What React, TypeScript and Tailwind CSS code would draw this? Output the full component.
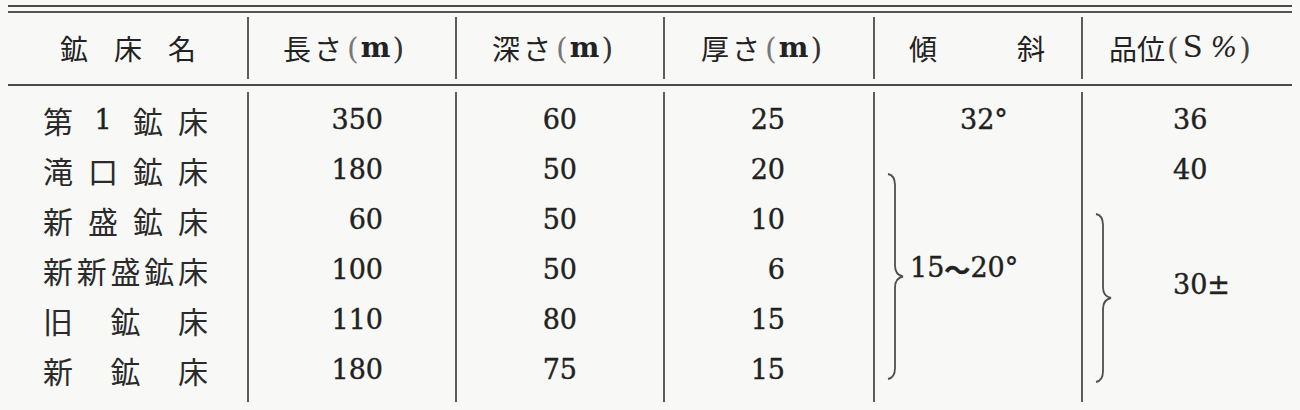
import React from "react";

const cjk = "font-['Noto_Sans_CJK_JP',sans-serif]";
const serif = "font-['DejaVu_Serif',serif] [-webkit-text-stroke:0.4px_#1f1f1f]";

const rows = [
  { name: ["第", "1", "鉱", "床"], len: "350", depth: "60", thick: "25" },
  { name: ["滝", "口", "鉱", "床"], len: "180", depth: "50", thick: "20" },
  { name: ["新", "盛", "鉱", "床"], len: "60", depth: "50", thick: "10" },
  { name: ["新", "新", "盛", "鉱", "床"], len: "100", depth: "50", thick: "6" },
  { name: ["旧", "鉱", "床"], len: "110", depth: "80", thick: "15" },
  { name: ["新", "鉱", "床"], len: "180", depth: "75", thick: "15" },
];

function Brace({ h, className }: { h: number; className: string }) {
  const m = h / 2;
  const d = `M1 1 C6 2 8 5 8 12 L8 ${m - 11} C8 ${m - 4} 11 ${m - 1} 16 ${m} C11 ${m + 1} 8 ${m + 4} 8 ${m + 11} L8 ${h - 12} C8 ${h - 5} 6 ${h - 2} 1 ${h - 1}`;
  return (
    <svg className={className} viewBox={`0 0 18 ${h}`} fill="none">
      <path d={d} stroke="#4f4f4f" strokeWidth="1.8" />
    </svg>
  );
}

function Unit({ jp, unit }: { jp: string; unit: string }) {
  return (
    <div className="flex items-center">
      <span className={`${cjk} text-[28px] tracking-[3px]`}>{jp}</span>
      <span className="font-['DejaVu_Serif',serif] text-[30px] ml-[2px] flex items-center">
        <span className="font-light text-[#777]">(</span>
        <span className="font-bold text-[28px] mx-[2px]">{unit}</span>
        <span className="text-[#333]">)</span>
      </span>
    </div>
  );
}

const divider = "border-l-2 border-[#5c5c5c]";

export default function App() {
  return (
    <div className="w-[1300px] h-[410px] bg-[#f8f8f6] text-[#222] pt-[5px] overflow-hidden">
      <div className="mx-[8px] h-[2px] bg-[#4a4a4a]" />
      <div className="mx-[8px] mt-[4px] h-[2px] bg-[#555]" />

      {/* header */}
      <div className="mx-[8px] grid grid-cols-[239px_208px_208px_210px_208px_211px] pt-[4px] pb-[5px]">
        <div className="h-[62px] flex items-center justify-between pl-[52px] pr-[51px]">
          {["鉱", "床", "名"].map((c, i) => (
            <span key={i} className={`${cjk} text-[28px]`}>{c}</span>
          ))}
        </div>
        <div className={`h-[62px] flex items-center pl-[34px] ${divider}`}>
          <Unit jp="長さ" unit="m" />
        </div>
        <div className={`h-[62px] flex items-center pl-[35px] ${divider}`}>
          <Unit jp="深さ" unit="m" />
        </div>
        <div className={`h-[62px] flex items-center pl-[36px] ${divider}`}>
          <Unit jp="厚さ" unit="m" />
        </div>
        <div className={`h-[62px] flex items-center justify-between pl-[34px] pr-[36px] ${divider}`}>
          <span className={`${cjk} text-[28px]`}>傾</span>
          <span className={`${cjk} text-[28px]`}>斜</span>
        </div>
        <div className={`h-[62px] flex items-center pl-[26px] ${divider}`}>
          <span className={`${cjk} text-[28px]`}>品位</span>
          <span className="font-['DejaVu_Serif',serif] text-[30px] font-light text-[#444] ml-[2px]">(</span>
          <span className="font-['DejaVu_Serif',serif] text-[29px] ml-[4px]">S</span>
          <span className="font-['DejaVu_Serif',serif] text-[28px] italic ml-[8px]">%</span>
          <span className="font-['DejaVu_Serif',serif] text-[30px] font-light text-[#444] ml-[2px]">)</span>
        </div>
      </div>
      <div className="mx-[8px] h-[2px] bg-[#4a4a4a]" />

      {/* body */}
      <div className="mx-[8px] mt-[6px] grid grid-cols-[239px_208px_208px_210px_208px_211px] h-[310px]">
        <div className="flex flex-col pt-[3px] pl-[35px] pr-[39px]">
          {rows.map((r, i) => (
            <div key={i} className="h-[50px] flex items-center justify-between">
              {r.name.map((c, j) => (
                <span
                  key={j}
                  className={
                    /\d/.test(c)
                      ? `${serif} text-[27px] w-[30px] text-center`
                      : `${cjk} text-[30px] text-[#2a2a2a]`
                  }
                >
                  {c}
                </span>
              ))}
            </div>
          ))}
        </div>
        <div className={`flex flex-col pt-[3px] pr-[72px] ${divider}`}>
          {rows.map((r, i) => (
            <div key={i} className={`h-[50px] flex items-center justify-end ${serif} text-[27px]`}>
              {r.len}
            </div>
          ))}
        </div>
        <div className={`flex flex-col pt-[3px] pr-[86px] ${divider}`}>
          {rows.map((r, i) => (
            <div key={i} className={`h-[50px] flex items-center justify-end ${serif} text-[27px]`}>
              {r.depth}
            </div>
          ))}
        </div>
        <div className={`flex flex-col pt-[3px] pr-[88px] ${divider}`}>
          {rows.map((r, i) => (
            <div key={i} className={`h-[50px] flex items-center justify-end ${serif} text-[27px]`}>
              {r.thick}
            </div>
          ))}
        </div>
        <div className={`flex flex-col pt-[3px] ${divider}`}>
          <div className={`h-[50px] flex items-center pl-[85px] ${serif} text-[27px]`}>32°</div>
          <div className="flex items-start mt-[28px]">
            <Brace h={207} className="ml-[12px] w-[18px] h-[207px]" />
            <div className={`mt-[80px] ml-[5px] h-[30px] flex items-center ${serif} text-[27px]`}>
              <span>15</span>
              <span className={`${cjk} text-[26px] font-bold`}>〜</span>
              <span>20°</span>
            </div>
          </div>
        </div>
        <div className={`flex flex-col pt-[3px] ${divider}`}>
          <div className={`h-[50px] flex items-center pl-[90px] ${serif} text-[27px]`}>36</div>
          <div className={`h-[50px] flex items-center pl-[90px] ${serif} text-[27px]`}>40</div>
          <div className="flex items-start mt-[18px]">
            <Brace h={170} className="ml-[12px] w-[18px] h-[170px]" />
            <div className={`mt-[57px] ml-[60px] h-[30px] flex items-center ${serif} text-[27px]`}>30±</div>
          </div>
        </div>
      </div>
    </div>
  );
}
